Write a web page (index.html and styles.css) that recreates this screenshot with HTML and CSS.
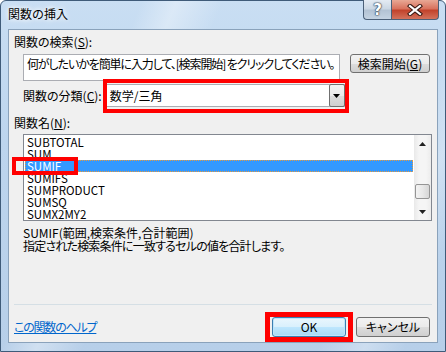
FILE: index.html
```html
<!DOCTYPE html>
<html lang="ja">
<head>
  <meta charset="UTF-8">
  <title>関数の挿入</title>
  <link rel="stylesheet" href="styles.css">
</head>
<body>
  <div class="window">
    <div class="titlebar">
      <span class="title">関数の挿入</span>
      <div class="caption">
        <span class="cap-help">?</span>
        <span class="cap-close">
          <svg width="16" height="12" viewBox="0 0 16 12">
            <path d="M3 2 L13 10 M13 2 L3 10" stroke="#3a1a14" stroke-width="4.2" stroke-linecap="square"/>
            <path d="M3 2 L13 10 M13 2 L3 10" stroke="#fff" stroke-width="2.2" stroke-linecap="square"/>
          </svg>
        </span>
      </div>
    </div>

    <div class="client">
      <div class="label">関数の検索(<u>S</u>):</div>
      <div class="search-row">
        <div class="search-box">何がしたいかを簡単に入力して、[検索開始] をクリックしてください。</div>
        <button class="btn btn-search">検索開始(<u>G</u>)</button>
      </div>

      <div class="category-row">
        <span class="label-inline">関数の分類(<u>C</u>):</span>
        <div class="combo">
          <span class="combo-text">数学/三角</span>
          <span class="combo-btn">
            <svg width="7" height="4" viewBox="0 0 7 4"><path d="M0 0 H7 L3.5 4 Z" fill="#000"/></svg>
          </span>
          <span class="mark mark-combo"></span>
        </div>
      </div>

      <div class="label label-list">関数名(<u>N</u>):</div>
      <div class="listbox">
        <ul class="items">
          <li>SUBTOTAL</li>
          <li>SUM</li>
          <li class="selected">SUMIF</li>
          <li>SUMIFS</li>
          <li>SUMPRODUCT</li>
          <li>SUMSQ</li>
          <li>SUMX2MY2</li>
        </ul>
        <div class="scrollbar">
          <span class="sb-arrow">
            <svg width="7" height="4" viewBox="0 0 7 4"><path d="M0 4 H7 L3.5 0 Z" fill="#222"/></svg>
          </span>
          <span class="sb-track"><span class="sb-thumb"></span></span>
          <span class="sb-arrow">
            <svg width="7" height="4" viewBox="0 0 7 4"><path d="M0 0 H7 L3.5 4 Z" fill="#222"/></svg>
          </span>
        </div>
        <span class="mark mark-item"></span>
      </div>

      <div class="desc">
        <p>SUMIF(範囲,検索条件,合計範囲)</p>
        <p class="narrow">指定された検索条件に一致するセルの値を合計します。</p>
      </div>

      <div class="separator"></div>

      <div class="footer">
        <a class="help" href="#">この関数のヘルプ</a>
        <div class="buttons">
          <span class="ok-wrap">
            <button class="btn btn-ok">OK</button>
            <span class="mark mark-ok"></span>
          </span>
          <button class="btn">キャンセル</button>
        </div>
      </div>
    </div>
  </div>
</body>
</html>
```

FILE: styles.css
```css
/* Windows 7 style dialog */
body {
  margin: 0;
  background: #fff;
  font-family: "Noto Sans CJK JP", sans-serif;
  font-size: 12px;
  color: #000;
}
.window {
  box-sizing: border-box;
  width: 446px;
  height: 352px;
  padding: 0 7px 8px;
  border: 1px solid #3f5b79;
  border-radius: 6px 6px 0 0;
  background:
    linear-gradient(112deg, transparent 24%, rgba(255,255,255,0.35) 30%, transparent 38%,
      transparent 78%, rgba(255,255,255,0.3) 86%, transparent 93%),
    linear-gradient(to bottom, #c9def3 0%, #bdd5ee 40%, #b7cfe9 100%);
  display: flex;
  flex-direction: column;
}
.titlebar {
  height: 28px;
  display: flex;
  align-items: flex-start;
}
.title {
  margin-top: 5px;
  line-height: 15px;
  font-size: 12px;
  text-shadow: 0 0 4px #fff, 0 0 6px #fff;
}
.caption {
  margin-left: auto;
  margin-top: -1px;
  margin-right: -1px;
  display: flex;
}
.cap-help,
.cap-close {
  box-sizing: border-box;
  height: 20px;
  display: flex;
  align-items: center;
  justify-content: center;
  border: 1px solid #4b6078;
  border-top: none;
}
.cap-help {
  width: 28px;
  border-right: none;
  border-radius: 0 0 0 4px;
  background: linear-gradient(to bottom, #e4ebf3 0%, #ccd8e4 45%, #b3c3d4 55%, #c4d3e2 100%);
  color: #fff;
  font-family: "DejaVu Sans", sans-serif;
  font-weight: bold;
  font-size: 15px;
  text-shadow: 0 0 1px #2a3a4c, 0 0 1px #2a3a4c, 0 0 2px #2a3a4c;
}
.cap-close {
  width: 48px;
  border-radius: 0 0 4px 0;
  background: linear-gradient(to bottom, #e8a895 0%, #d9735e 45%, #c2432c 55%, #d3725c 100%);
}
.client {
  box-sizing: border-box;
  height: 314px;
  padding: 5px 5px 0;
  border: 1px solid #8aa2bb;
  background: #f0f0f0;
  font-feature-settings: "palt";
}
.label {
  line-height: 14px;
}
.label-list {
  margin-top: 9px;
}
.narrow {
  letter-spacing: -0.8px;
}
.search-row {
  display: flex;
  align-items: flex-start;
  gap: 10px;
  margin: 5px 0 0 9px;
}
.search-box {
  box-sizing: border-box;
  width: 317px;
  height: 27px;
  padding: 2px 3px;
  border: 1px solid #abadb3;
  background: #fff;
  line-height: 14px;
  letter-spacing: -1.1px;
  white-space: nowrap;
  overflow: hidden;
}
.btn {
  box-sizing: border-box;
  height: 20px;
  padding: 0;
  border: 1px solid #707070;
  border-radius: 3px;
  background: linear-gradient(to bottom, #f2f2f2 0%, #ebebeb 50%, #dddddd 51%, #cfcfcf 100%);
  font: inherit;
  line-height: 16px;
  width: 74px;
  color: #000;
}
.btn-search {
  width: 80px;
  height: 19px;
  line-height: 15px;
}
.btn-ok {
  border-color: #3c7fb1;
  background: linear-gradient(to bottom, #eaf6fd 0%, #d9f0fc 50%, #bee6fd 51%, #a7d9f5 100%);
  box-shadow: inset 0 0 0 1px #bfe5fb;
}
.category-row {
  display: flex;
  align-items: center;
  gap: 4px;
  margin: 3px 0 0 9px;
}
.combo {
  position: relative;
  box-sizing: border-box;
  width: 239px;
  height: 23px;
  display: flex;
  align-items: center;
  justify-content: space-between;
  border: 1px solid #abadb3;
  background: #fff;
}
.combo-text {
  padding-left: 3px;
}
.combo-btn {
  box-sizing: border-box;
  width: 16px;
  height: 23px;
  margin: -1px -1px -1px 0;
  display: flex;
  align-items: center;
  justify-content: center;
  border: 1px solid #707070;
  border-radius: 2px;
  background: linear-gradient(to bottom, #f2f2f2 0%, #ebebeb 50%, #dddddd 51%, #cfcfcf 100%);
}
.listbox {
  position: relative;
  box-sizing: border-box;
  height: 87px;
  margin: 4px 0 0 9px;
  display: flex;
  border: 1px solid #828790;
  background: #fff;
}
.items {
  flex: 1;
  list-style: none;
  margin: 0;
  padding: 1px 1px 0 1px;
}
.items li {
  height: 12px;
  line-height: 12px;
  padding-left: 2px;
  font-size: 11.5px;
}
.items li.selected {
  background: #3399ff;
  color: #fff;
  outline: 1px dotted #e89a3c;
  outline-offset: -1px;
}
.scrollbar {
  width: 17px;
  display: flex;
  flex-direction: column;
  background: linear-gradient(to right, #e9e9e9, #f5f5f5 30%, #f5f5f5 70%, #ececec);
}
.sb-arrow {
  height: 17px;
  display: flex;
  align-items: center;
  justify-content: center;
}
.sb-track {
  flex: 1;
}
.sb-thumb {
  display: block;
  box-sizing: border-box;
  width: 15px;
  height: 15px;
  margin: 32px 0 0 1px;
  border: 1px solid #959595;
  border-radius: 2px;
  background: linear-gradient(to right, #f3f3f3, #e8e8e8 50%, #d6d6d6);
}
.desc {
  margin: 5px 0 0 9px;
  line-height: 13px;
}
.desc p {
  margin: 0;
}
.separator {
  height: 1px;
  margin-top: 52px;
  background: #d5dfe5;
}
.footer {
  display: flex;
  align-items: center;
  justify-content: space-between;
  margin-top: 12px;
}
.help {
  color: #0066cc;
  line-height: 14px;
  letter-spacing: -1.2px;
}
.buttons {
  display: flex;
  gap: 10px;
  margin-right: 2px;
}
.ok-wrap {
  position: relative;
  display: flex;
}
/* red annotation boxes drawn over the dialog */
.mark {
  position: absolute;
  box-sizing: border-box;
  border: 4px solid #ff0000;
  pointer-events: none;
}
.mark-combo {
  left: -4px;
  top: -6px;
  width: 246px;
  height: 34px;
}
.mark-item {
  left: -12px;
  top: 22px;
  width: 66px;
  height: 18px;
}
.mark-ok {
  left: -7px;
  top: -5px;
  width: 88px;
  height: 30px;
  border-width: 5px;
}
```
